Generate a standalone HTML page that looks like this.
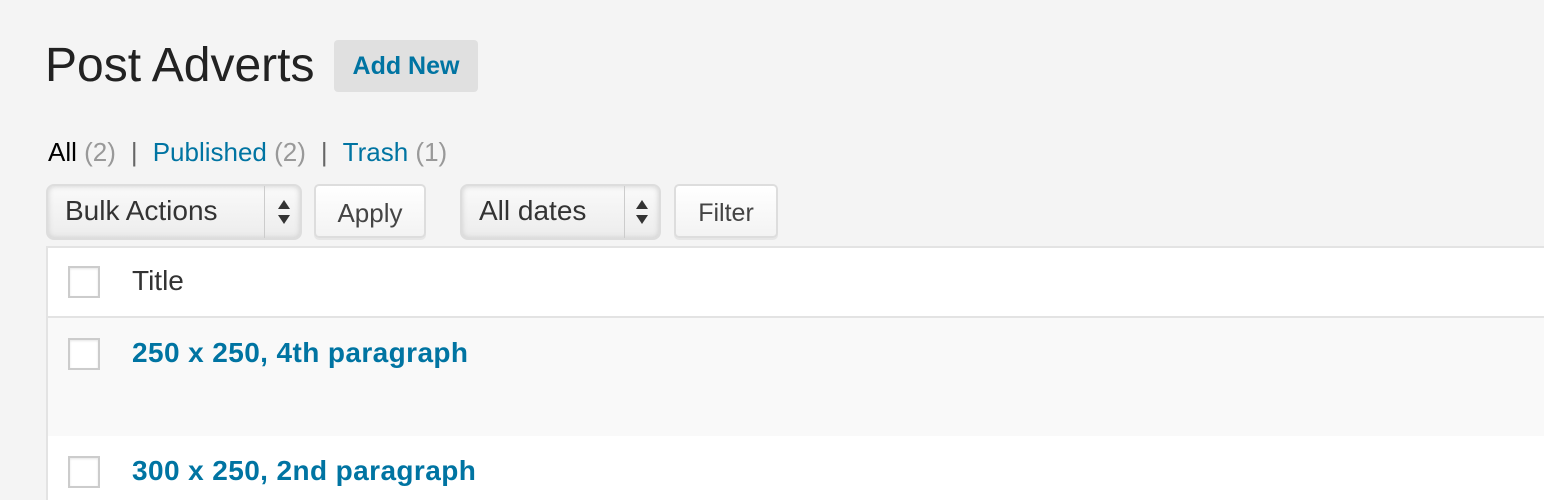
<!DOCTYPE html>
<html style="height:500px;overflow:hidden"><head><meta charset="utf-8"><style>
*{box-sizing:border-box;margin:0;padding:0}
body{width:1544px;height:500px;overflow:hidden;background:#f4f4f4;font-family:"Liberation Sans",sans-serif;color:#222;position:relative}
.abs{position:absolute}
h1{position:absolute;left:45px;top:36px;font-size:48px;font-weight:normal;color:#222;line-height:60px}
.addnew{left:334px;top:40px;width:144px;height:52px;background:#e0e0e0;border-radius:4px;color:#0074a2;font-weight:bold;font-size:25px;line-height:52px;text-align:center}
.subs{left:48px;top:136px;font-size:26px;line-height:32px;color:#666}
.subs b{font-weight:normal;color:#000}
.subs a{color:#0074a2;text-decoration:none}
.subs .c{color:#999}
.sep{margin:0 15px}
.btn{border:2px solid #ddd;border-radius:5px;background:linear-gradient(#fff,#f3f3f3);font-size:26px;color:#444;box-shadow:0 2px 0 #e6e6e6}
.sel{border:2px solid #ddd;border-radius:8px;background:linear-gradient(#fafafa,#ececec);box-shadow:inset 0 0 6px #ccc;font-size:28px;color:#333}
.sel .div{position:absolute;top:0;bottom:0;width:1px;background:#ccc}
.arr{position:absolute;width:0;height:0;border-left:6px solid transparent;border-right:6px solid transparent}
.tbl{left:46px;top:246px;width:1498px;height:254px;border-top:2px solid #e3e3e3;border-left:2px solid #e3e3e3;background:#fff}
.cb{position:absolute;width:32px;height:32px;border:2px solid #ccc;background:#fff;box-shadow:inset 0 1px 2px rgba(0,0,0,.1)}
.link{color:#0074a2;font-weight:bold;font-size:28px;letter-spacing:0.4px;white-space:nowrap}
</style></head><body>
<h1>Post Adverts</h1>
<div class="abs addnew">Add New</div>
<div class="abs subs"><b>All</b> <span class="c">(2)</span><span class="sep">|</span><a>Published</a> <span class="c">(2)</span><span class="sep">|</span><a>Trash</a> <span class="c">(1)</span></div>

<div class="abs sel" style="left:46px;top:184px;width:256px;height:56px">
 <span class="abs" style="left:17px;top:9px">Bulk Actions</span>
 <div class="div" style="left:216px"></div>
 <div class="arr" style="left:230px;top:14px;border-bottom:9px solid #333"></div>
 <div class="arr" style="left:230px;top:29px;border-top:9px solid #333"></div>
</div>
<div class="abs btn" style="left:314px;top:184px;width:112px;height:54px;text-align:center;line-height:54px">Apply</div>
<div class="abs sel" style="left:460px;top:184px;width:201px;height:56px">
 <span class="abs" style="left:17px;top:9px">All dates</span>
 <div class="div" style="left:162px"></div>
 <div class="arr" style="left:174px;top:14px;border-bottom:9px solid #333"></div>
 <div class="arr" style="left:174px;top:29px;border-top:9px solid #333"></div>
</div>
<div class="abs btn" style="left:674px;top:184px;width:104px;height:54px;text-align:center;line-height:54px;font-size:25px">Filter</div>

<div class="abs tbl"></div>
<div class="abs" style="left:48px;top:316px;width:1496px;height:2px;background:#e3e3e3"></div>
<div class="abs" style="left:48px;top:318px;width:1496px;height:118px;background:#f9f9f9"></div>
<div class="cb" style="left:68px;top:266px"></div>
<div class="abs" style="left:132px;top:263px;font-size:28px;line-height:36px;color:#333">Title</div>
<div class="cb" style="left:68px;top:338px"></div>
<div class="abs link" style="left:132px;top:335px;line-height:36px">250 x 250, 4th paragraph</div>
<div class="cb" style="left:68px;top:456px"></div>
<div class="abs link" style="left:132px;top:453px;line-height:36px">300 x 250, 2nd paragraph</div>
</body></html>
